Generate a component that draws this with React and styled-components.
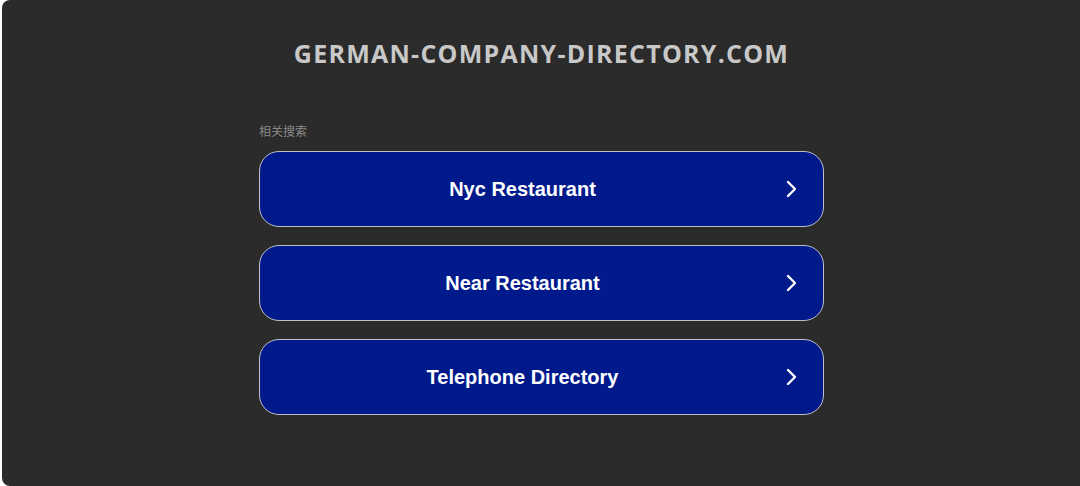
import React from "react";
import styled, { createGlobalStyle } from "styled-components";

const Global = createGlobalStyle`
  html, body { margin: 0; padding: 0; background: #ffffff; overflow: hidden; }
  #root { width: 1080px; height: 486px; }
`;

const Panel = styled.div`
  box-sizing: border-box;
  margin-left: 2px;
  width: 1079px;
  height: 486px;
  background: #2b2b2b;
  border-radius: 8px 0 0 8px;
  display: flex;
  flex-direction: column;
  align-items: center;
  padding-top: 36px;
`;

const Title = styled.h1`
  margin: 0;
  font-family: "Open Sans", sans-serif;
  font-weight: 700;
  font-size: 25px;
  line-height: 34px;
  letter-spacing: 1.25px;
  color: #c8c8c8;
`;

const Section = styled.div`
  width: 565px;
  margin-top: 53px;
  display: flex;
  flex-direction: column;
`;

const Label = styled.div`
  font-family: "Noto Sans CJK SC", "Noto Sans", sans-serif;
  font-size: 12px;
  line-height: 16px;
  color: #8a8a8a;
  margin-bottom: 12px;
`;

const List = styled.div`
  display: flex;
  flex-direction: column;
  gap: 18px;
`;

const Item = styled.a`
  box-sizing: border-box;
  height: 76px;
  border: 1px solid #c0c0c8;
  border-radius: 20px;
  background: #011a8b;
  display: flex;
  align-items: center;
  padding: 0 26px 0 0;
  text-decoration: none;
  cursor: pointer;
`;

const ItemText = styled.span`
  flex: 1;
  text-align: center;
  font-family: "Liberation Sans", Arial, sans-serif;
  font-weight: 700;
  font-size: 20px;
  color: #ffffff;
`;

const Chevron = () => (
  <svg width="12" height="18" viewBox="0 0 12 18" fill="none">
    <path d="M3 2 L10 9 L3 16" stroke="#ffffff" strokeWidth="2.4" strokeLinecap="round" strokeLinejoin="round" />
  </svg>
);

const items = ["Nyc Restaurant", "Near Restaurant", "Telephone Directory"];

export default function App() {
  return (
    <>
      <Global />
      <Panel>
        <Title>GERMAN-COMPANY-DIRECTORY.COM</Title>
        <Section>
          <Label>相关搜索</Label>
          <List>
            {items.map((t) => (
              <Item key={t}>
                <ItemText>{t}</ItemText>
                <Chevron />
              </Item>
            ))}
          </List>
        </Section>
      </Panel>
    </>
  );
}
